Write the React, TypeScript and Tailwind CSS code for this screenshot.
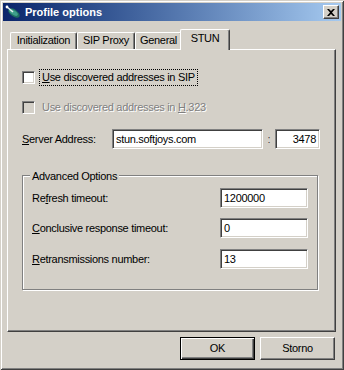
import React from 'react';

const sunken =
    'border border-t-[#808080] border-l-[#808080] border-r-white border-b-white shadow-[inset_1px_1px_0_#404040,inset_-1px_-1px_0_#d4d0c8]';
const raised =
    'border border-t-white border-l-white border-r-[#404040] border-b-[#404040] shadow-[inset_-1px_-1px_0_#808080]';

const Check: React.FC<{ disabled?: boolean }> = ({ disabled }) => (
    <span className={`block w-[13px] h-[13px] shrink-0 ${sunken} ${disabled ? 'bg-[#d4d0c8]' : 'bg-white'}`} />
);

const Field: React.FC<{ value: string; className: string; right?: boolean }> = ({ value, className, right }) => (
    <div className={`h-[20px] bg-white flex items-center px-[3px] ${sunken} ${right ? 'justify-end' : ''} ${className}`}>
        {value}
    </div>
);

const Tab: React.FC<{ label: string; active?: boolean; className?: string }> = ({ label, active, className }) => (
    <div
        className={`relative flex items-center justify-center rounded-tl-[2px] rounded-tr-[2px] border-t border-l border-t-white border-l-white border-r border-r-[#404040] shadow-[inset_-1px_0_0_#808080] ${
            active ? 'h-[21px] -mb-[1px] z-10 bg-[#d4d0c8] pb-[3px] -mx-[2px]' : 'h-[17px] pb-[1px]'
        } ${className ?? ''}`}
    >
        {label}
    </div>
);

export default function App() {
    return (
        <div className="w-[344px] h-[370px] bg-[#d4d0c8] p-[3px] flex flex-col text-[11px] text-black font-['Liberation_Sans',Arial,sans-serif] shadow-[inset_1px_1px_0_#d4d0c8,inset_-1px_-1px_0_#404040,inset_2px_2px_0_#fff,inset_-2px_-2px_0_#808080] select-none">
            {/* title bar */}
            <div className="h-[18px] flex items-center bg-gradient-to-r from-[#0a246a] to-[#a6caf0] pl-[2px] pr-[2px]">
                <svg width="16" height="16" viewBox="0 0 16 16">
                    <ellipse cx="9" cy="9" rx="6.5" ry="3.5" transform="rotate(35 9 9)" fill="#1f6f62" />
                    <ellipse cx="8.5" cy="8.5" rx="5" ry="2.2" transform="rotate(35 8.5 8.5)" fill="#3fa08c" />
                    <path d="M1.5 2.5 L8 8" stroke="#e8f0f0" strokeWidth="1.6" />
                    <circle cx="2" cy="3" r="1.4" fill="#ffffff" />
                </svg>
                <span className="ml-[4px] text-white font-bold">Profile options</span>
                <div className={`ml-auto w-[16px] h-[14px] bg-[#d4d0c8] flex items-center justify-center ${raised}`}>
                    <svg width="8" height="7" viewBox="0 0 8 7">
                        <path d="M0 0h2l2 2 2-2h2L5 3.5 8 7H6L4 5 2 7H0l3-3.5z" fill="#000" />
                    </svg>
                </div>
            </div>

            <div className="flex-1 flex flex-col pl-[4px] pr-[5px] pt-[8px] tracking-[-0.3px]">
                {/* tabs */}
                <div className="h-[20px] flex items-end pl-[3px]">
                    <Tab label="Initialization" className="w-[67px]" />
                    <Tab label="SIP Proxy" className="w-[58px]" />
                    <Tab label="General" className="w-[47px]" />
                    <Tab label="STUN" active className="w-[50px]" />
                </div>

                {/* panel */}
                <div className="h-[283px] flex flex-col border border-t-white border-l-white border-r-[#404040] border-b-[#404040] shadow-[inset_-1px_-1px_0_#808080] pl-[14px]">
                    <div className="mt-[19px] h-[17px] flex items-center">
                        <Check />
                        <span className="ml-[4px] h-[17px] px-[2px] flex items-center border border-dotted border-black">
                            <span className="underline">U</span>se discovered addresses in SIP
                        </span>
                    </div>
                    <div className="mt-[13px] h-[17px] flex items-center">
                        <Check disabled />
                        <span className="ml-[5px] px-[2px] text-[#808080] [text-shadow:1px_1px_0_#fff]">
                            Use discovered addresses in <span className="underline">H</span>.323
                        </span>
                    </div>
                    <div className="mt-[13px] h-[20px] flex items-center">
                        <span className="w-[90px]">
                            <span className="underline">S</span>erver Address:
                        </span>
                        <Field value="stun.softjoys.com" className="w-[151px]" />
                        <span className="w-[12px] text-center text-[#404040]">:</span>
                        <Field value="3478" right className="w-[45px]" />
                    </div>

                    {/* group box */}
                    <div className="relative mt-[26px] w-[296px] h-[115px] border border-[#808080] shadow-[inset_1px_1px_0_#fff,1px_1px_0_#fff] flex flex-col px-[9px] pt-[12px]">
                        <span className="absolute -top-[8px] left-[7px] px-[2px] bg-[#d4d0c8]">Advanced Options</span>
                        <div className="h-[20px] flex items-center justify-between">
                            <span>
                                Re<span className="underline">f</span>resh timeout:
                            </span>
                            <Field value="1200000" className="w-[88px]" />
                        </div>
                        <div className="mt-[10px] h-[20px] flex items-center justify-between">
                            <span>
                                <span className="underline">C</span>onclusive response timeout:
                            </span>
                            <Field value="0" className="w-[88px]" />
                        </div>
                        <div className="mt-[11px] h-[20px] flex items-center justify-between">
                            <span>
                                <span className="underline">R</span>etransmissions number:
                            </span>
                            <Field value="13" className="w-[88px]" />
                        </div>
                    </div>
                </div>

                {/* buttons */}
                <div className="mt-[5px] flex justify-end gap-[5px] pr-[1px]">
                    <button className="w-[75px] h-[23px] bg-[#d4d0c8] border border-black shadow-[inset_1px_1px_0_#fff,inset_-1px_-1px_0_#404040,inset_-2px_-2px_0_#808080]">
                        OK
                    </button>
                    <button className={`w-[75px] h-[23px] bg-[#d4d0c8] ${raised}`}>Storno</button>
                </div>
            </div>
        </div>
    );
}
